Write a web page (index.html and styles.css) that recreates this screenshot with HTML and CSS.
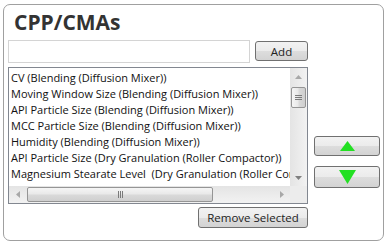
FILE: index.html
```html
<!DOCTYPE html>
<html>
  <head>
    <meta charset="UTF-8">
    <title>CPP/CMAs</title>
    <link rel="stylesheet" href="styles.css">
  </head>
  <body>
    <div class="panel">
      <h2 class="title">CPP/CMAs</h2>

      <!-- new entry -->
      <div class="entry">
        <input type="text" class="entry-input">
        <button class="btn btn-add">Add</button>
      </div>

      <div class="main">
        <div class="list-col">
          <div class="listbox">
            <div class="items">
              <div class="item">CV (Blending (Diffusion Mixer))</div>
              <div class="item">Moving Window Size (Blending (Diffusion Mixer))</div>
              <div class="item">API Particle Size (Blending (Diffusion Mixer))</div>
              <div class="item">MCC Particle Size (Blending (Diffusion Mixer))</div>
              <div class="item">Humidity (Blending (Diffusion Mixer))</div>
              <div class="item">API Particle Size (Dry Granulation (Roller Compactor))</div>
              <div class="item">Magnesium Stearate Level  (Dry Granulation (Roller Compactor))</div>
              <div class="item">Compaction Roll Speed (Dry Granulation (Roller Compactor))</div>
              <div class="item">Roll Gap (Dry Granulation (Roller Compactor))</div>
            </div>

            <div class="vscroll">
              <div class="sb-arrow">
                <svg width="7" height="4" viewBox="0 0 7 4"><polygon points="0,4 3.5,0 7,4" fill="#a8a8a8"/></svg>
              </div>
              <div class="sb-track">
                <div class="sb-thumb sb-thumb-v">
                  <svg width="7" height="5" viewBox="0 0 7 5">
                    <rect x="0" y="0" width="7" height="1" fill="#7a7a7a"/>
                    <rect x="0" y="2" width="7" height="1" fill="#7a7a7a"/>
                    <rect x="0" y="4" width="7" height="1" fill="#7a7a7a"/>
                  </svg>
                </div>
              </div>
              <div class="sb-arrow">
                <svg width="7" height="4" viewBox="0 0 7 4"><polygon points="0,0 7,0 3.5,4" fill="#808080"/></svg>
              </div>
            </div>

            <div class="hscroll">
              <div class="sb-arrow">
                <svg width="4" height="7" viewBox="0 0 4 7"><polygon points="4,0 4,7 0,3.5" fill="#a8a8a8"/></svg>
              </div>
              <div class="sb-track">
                <div class="sb-thumb sb-thumb-h">
                  <svg width="5" height="7" viewBox="0 0 5 7">
                    <rect x="0" y="0" width="1" height="7" fill="#7a7a7a"/>
                    <rect x="2" y="0" width="1" height="7" fill="#7a7a7a"/>
                    <rect x="4" y="0" width="1" height="7" fill="#7a7a7a"/>
                  </svg>
                </div>
              </div>
              <div class="sb-arrow">
                <svg width="4" height="7" viewBox="0 0 4 7"><polygon points="0,0 4,3.5 0,7" fill="#a8a8a8"/></svg>
              </div>
            </div>

            <div class="sb-corner"></div>
          </div>
          <button class="btn btn-remove">Remove Selected</button>
        </div>

        <!-- move up / down -->
        <div class="move-col">
          <button class="btn btn-move btn-up">
            <svg width="15" height="10" viewBox="0 0 15 10"><polygon points="0,10 7.5,0 15,10" fill="#22e022"/></svg>
          </button>
          <button class="btn btn-move btn-down">
            <svg width="17" height="14" viewBox="0 0 17 14"><polygon points="0,0 17,0 8.5,14" fill="#22e022"/></svg>
          </button>
        </div>
      </div>
    </div>
  </body>
</html>
```

FILE: styles.css
```css
body { margin: 0; background: #fff; font-family: "Open Sans", "Liberation Sans", sans-serif; }

.panel {
  margin: 4px 0 0 3px;
  width: 381px;
  height: 237px;
  box-sizing: border-box;
  border: 1px solid #a0a0a0;
  border-radius: 7px;
  padding: 0 3px 0 4px;
}

.title {
  margin: 0;
  height: 35px;
  padding-left: 6px;
  font-size: 21px;
  line-height: 35px;
  font-weight: bold;
  color: #333;
}

.entry { display: flex; height: 23px; }
.entry-input {
  width: 242px;
  height: 23px;
  box-sizing: border-box;
  margin: 0;
  border: 1px solid #d4d4d4;
  padding: 0 3px;
}

.btn {
  box-sizing: border-box;
  margin: 0;
  padding: 0;
  border: 1px solid #707070;
  border-radius: 3px;
  background: linear-gradient(#f2f2f2, #ebebeb 50%, #dddddd 50%, #d3d3d3);
  font-family: "Open Sans", "Liberation Sans", sans-serif;
  font-size: 11.5px;
  color: #222;
  display: flex;
  align-items: center;
  justify-content: center;
}
.btn-add { width: 53px; height: 20px; margin: 1px 0 0 5px; }

.main { display: flex; margin-top: 4px; }
.list-col { width: 300px; display: flex; flex-direction: column; align-items: flex-end; }

.listbox {
  width: 300px;
  height: 137px;
  box-sizing: border-box;
  border: 1px solid #828790;
  display: grid;
  grid-template-columns: 1fr 17px;
  grid-template-rows: 1fr 17px;
  align-self: stretch;
}
.items { overflow: hidden; padding: 2px 0 0 2px; }
.item {
  font-size: 11px;
  line-height: 16px;
  color: #111;
  white-space: pre;
}

.vscroll, .hscroll { background: #ececec; display: flex; }
.vscroll { flex-direction: column; background: linear-gradient(to right, #e4e4e4, #f2f2f2); }
.hscroll { background: linear-gradient(#e4e4e4, #f2f2f2); }
.sb-arrow { flex: 0 0 17px; display: flex; align-items: center; justify-content: center; }
.sb-track { flex: 1; display: flex; }
.vscroll .sb-track { flex-direction: column; }
.sb-thumb {
  box-sizing: border-box;
  border: 1px solid #959595;
  border-radius: 2px;
  display: flex;
  align-items: center;
  justify-content: center;
}
.sb-thumb-v {
  margin: 2px 1px 0;
  height: 21px;
  background: linear-gradient(to right, #f5f5f5, #e9e9e9 45%, #d9d9d9 55%, #cfcfcf);
}
.sb-thumb-h {
  margin: 1px 0 1px 1px;
  width: 186px;
  background: linear-gradient(#f5f5f5, #e9e9e9 45%, #d9d9d9 55%, #cfcfcf);
}
.sb-corner { background: #ececec; }

.btn-remove { width: 110px; height: 21px; margin-top: 3px; }

.move-col { margin-left: 6px; width: 66px; display: flex; flex-direction: column; }
.btn-move { width: 66px; }
.btn-up { height: 20px; margin-top: 69px; }
.btn-down { height: 22px; margin-top: 10px; }
```
